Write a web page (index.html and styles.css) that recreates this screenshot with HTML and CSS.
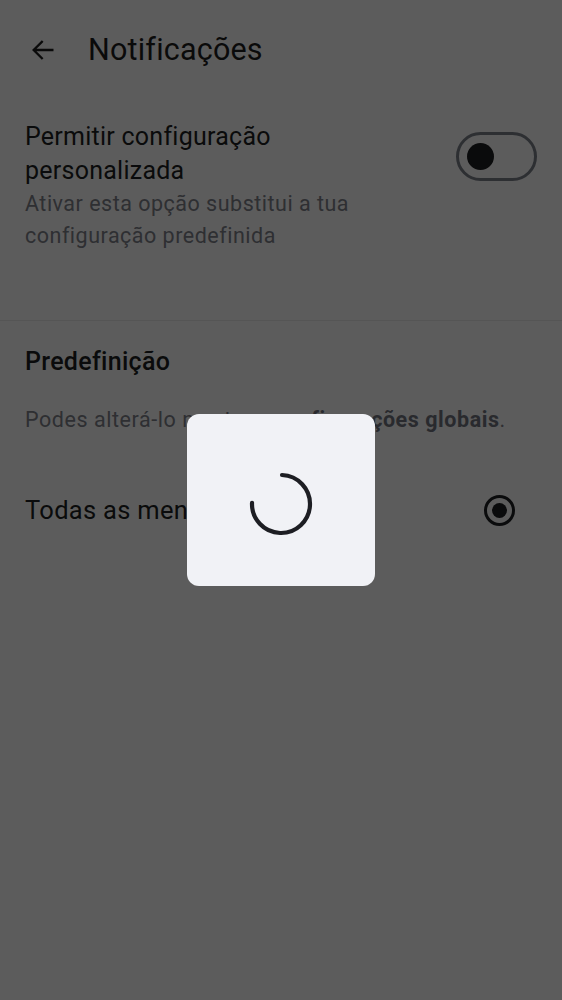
FILE: index.html
```html
<!DOCTYPE html>
<html lang="pt">
<head>
<meta charset="utf-8">
<title>Notificações</title>
<link rel="stylesheet" href="styles.css">
</head>
<body>
<div class="page">
  <header class="appbar">
    <svg class="back" viewBox="0 0 24 24" width="28" height="28" aria-hidden="true">
      <path d="M20 12H4.5M11 5l-7 7 7 7" fill="none" stroke="currentColor" stroke-width="2" stroke-linecap="square"/>
    </svg>
    <h1 class="title">Notificações</h1>
  </header>

  <section class="setting">
    <div class="setting-text">
      <div class="setting-title">Permitir configuração personalizada</div>
      <div class="setting-sub">Ativar esta opção substitui a tua configuração predefinida</div>
    </div>
    <div class="toggle"><span class="knob"></span></div>
  </section>

  <hr class="divider">

  <section class="preset">
    <h2 class="preset-title">Predefinição</h2>
    <p class="preset-note">Podes alterá-lo nas tuas <b>configurações globais</b>.</p>
    <div class="option">
      <span class="option-label">Todas as mensagens</span>
      <span class="radio"><span class="radio-dot"></span></span>
    </div>
  </section>
</div>

<div class="overlay">
  <div class="dialog">
    <svg class="spinner" viewBox="0 0 64 64" width="64" height="64" aria-hidden="true">
      <circle cx="32" cy="32" r="29" fill="none" stroke="#1d1e23" stroke-width="4.2" stroke-linecap="round"
        stroke-dasharray="136.7 200" transform="rotate(-88 32 32)"/>
    </svg>
  </div>
</div>
</body>
</html>
```

FILE: styles.css
```css
* { box-sizing: border-box; }

html, body {
  margin: 0;
  padding: 0;
  background: #ffffff;
}

body {
  font-family: Roboto, "Noto Sans", "Liberation Sans", sans-serif;
  color: #1e1f22;
  width: 562px;
  height: 1000px;
  overflow: hidden;
}

.appbar {
  height: 100px;
  display: flex;
  align-items: center;
  padding-left: 29px;
}

.back {
  color: #1e1e1e;
  flex: none;
}

.title {
  margin: 0 0 0 31px;
  font-size: 30.5px;
  line-height: 40px;
  font-weight: 400;
  letter-spacing: 0.2px;
  color: #1e1e1e;
}

.setting {
  display: flex;
  align-items: flex-start;
  justify-content: space-between;
  padding: 20px 25px 68px 25px;
}

.setting-text {
  width: 345px;
}

.setting-title {
  font-size: 25px;
  line-height: 34px;
  color: #1e1f22;
  letter-spacing: 0.25px;
}

.setting-sub {
  font-size: 21.5px;
  line-height: 32px;
  color: #7f838c;
  letter-spacing: 0.5px;
}

.toggle {
  margin-top: 12px;
  width: 81px;
  height: 49px;
  border: 3px solid #7d828c;
  border-radius: 25px;
  display: flex;
  align-items: center;
  padding-left: 8px;
}

.knob {
  width: 27px;
  height: 27px;
  border-radius: 50%;
  background: #1e1f22;
}

.divider {
  margin: 0;
  border: 0;
  height: 1px;
  background: #ececec;
}

.preset {
  padding: 26px 25px 0 25px;
}

.preset-title {
  margin: 0;
  font-size: 25px;
  line-height: 30px;
  font-weight: 500;
  letter-spacing: 0.3px;
  color: #1e1f22;
}

.preset-note {
  margin: 28px 0 0 0;
  font-size: 21.5px;
  line-height: 30px;
  color: #7f838c;
  letter-spacing: 0.55px;
}

.preset-note b {
  font-weight: 700;
  color: #72767f;
}

.option {
  margin-top: 58px;
  height: 34px;
  display: flex;
  align-items: center;
  justify-content: space-between;
  padding-right: 22px;
}

.option-label {
  font-size: 25.5px;
  color: #1e1f22;
  letter-spacing: 0.3px;
}

.radio {
  width: 31px;
  height: 31px;
  border: 3px solid #1e1f22;
  border-radius: 50%;
  display: flex;
  align-items: center;
  justify-content: center;
}

.radio-dot {
  width: 15px;
  height: 15px;
  border-radius: 50%;
  background: #1e1f22;
}

.overlay {
  position: fixed;
  inset: 0;
  background: rgba(0, 0, 0, 0.64);
  display: flex;
  align-items: center;
  justify-content: center;
}

.dialog {
  width: 188px;
  height: 172px;
  border-radius: 12px;
  background: #f1f2f6;
  display: flex;
  align-items: center;
  justify-content: center;
  padding-top: 8px;
}
```
